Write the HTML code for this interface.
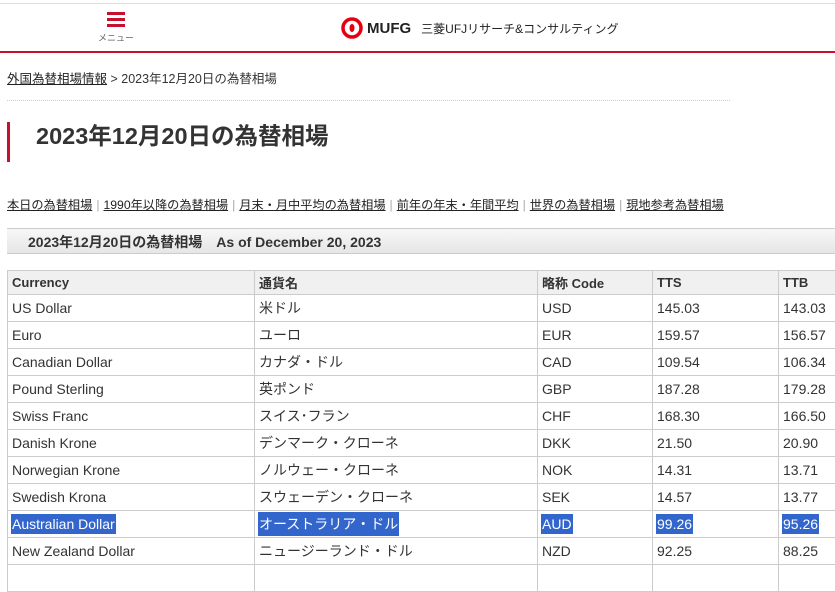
<!DOCTYPE html>
<html><head><meta charset="utf-8"><style>
body{margin:0;width:835px;height:569px;overflow:hidden;background:#fff;font-family:"Liberation Sans","Noto Sans CJK JP",sans-serif;color:#333;position:relative}
.a{position:absolute}
.top{left:0;top:3px;width:835px;height:1px;background:#ddd}
.red{left:0;top:51px;width:835px;height:2px;background:#c8102e}
.menu{left:98px;top:12px;width:36px;text-align:center;font-size:9px;color:#666}
.bars{width:18px;margin:0 auto 4px;height:15px;border-top:3px solid #c8102e;border-bottom:3px solid #c8102e;position:relative;box-sizing:border-box}
.bars:after{content:"";position:absolute;left:0;right:0;top:3px;height:3px;background:#c8102e}
.logo{left:341px;top:17px;display:flex;align-items:center;font-size:12px}
.crumb{left:7px;top:68px;font-size:12.5px;color:#333}
.crumb u{color:#222}
.dots{left:7px;top:100px;width:723px;border-top:1px dotted #ccc}
.bar{left:7px;top:122px;width:3px;height:40px;background:#c8102e}
.h1{left:36px;top:117px;font-size:23.5px;font-weight:bold;color:#333}
.links{left:7px;top:195px;font-size:12.2px;color:#222;white-space:nowrap}
.links u{color:#222}.links span{color:#aaa;margin:0 4px}
.cap{left:7px;top:228px;width:828px;height:26px;background:linear-gradient(#f7f7f7,#e6e6e6);border-top:1px solid #ccc;border-bottom:1px solid #ccc;box-sizing:border-box;font-size:14px;font-weight:bold;padding:3px 0 0 21px;color:#333}
table{position:absolute;left:7px;top:270px;border-collapse:collapse;font-size:14px;width:840px;table-layout:fixed}
td{border:1px solid #ccc;height:26px;padding:0 4px;color:#333;white-space:nowrap;overflow:hidden}
tr.h td{background:#f0f0f0;font-weight:bold;font-size:13px;height:23px}
tr.s td span{background:#3366cc;color:#fff;display:inline-block;padding:2px 1px;margin-left:-1px}
</style></head><body>
<div class="a top"></div>
<div class="a menu"><div class="bars"></div>メニュー</div>
<div class="a logo"><svg width="22" height="22" viewBox="0 0 22 22"><circle cx="11" cy="11" r="9" fill="none" stroke="#e60012" stroke-width="3.5"/><ellipse cx="11" cy="11" rx="2.5" ry="4" fill="#e60012"/></svg><b style="margin-left:4px;font-size:15px;color:#222">MUFG</b><span style="margin-left:10px;color:#222">三菱UFJリサーチ&amp;コンサルティング</span></div>
<div class="a red"></div>
<div class="a crumb"><u>外国為替相場情報</u> &gt; 2023年12月20日の為替相場</div>
<div class="a dots"></div>
<div class="a bar"></div>
<div class="a h1">2023年12月20日の為替相場</div>
<div class="a links"><u>本日の為替相場</u><span>|</span><u>1990年以降の為替相場</u><span>|</span><u>月末・月中平均の為替相場</u><span>|</span><u>前年の年末・年間平均</u><span>|</span><u>世界の為替相場</u><span>|</span><u>現地参考為替相場</u></div>
<div class="a cap">2023年12月20日の為替相場　As of December 20, 2023</div>
<table>
<colgroup><col style="width:247px"><col style="width:283px"><col style="width:115px"><col style="width:126px"><col></colgroup>
<tr class="h"><td>Currency</td><td>通貨名</td><td>略称 Code</td><td>TTS</td><td>TTB</td></tr>
<tr><td>US Dollar</td><td>米ドル</td><td>USD</td><td>145.03</td><td>143.03</td></tr>
<tr><td>Euro</td><td>ユーロ</td><td>EUR</td><td>159.57</td><td>156.57</td></tr>
<tr><td>Canadian Dollar</td><td>カナダ・ドル</td><td>CAD</td><td>109.54</td><td>106.34</td></tr>
<tr><td>Pound Sterling</td><td>英ポンド</td><td>GBP</td><td>187.28</td><td>179.28</td></tr>
<tr><td>Swiss Franc</td><td>スイス･フラン</td><td>CHF</td><td>168.30</td><td>166.50</td></tr>
<tr><td>Danish Krone</td><td>デンマーク・クローネ</td><td>DKK</td><td>21.50</td><td>20.90</td></tr>
<tr><td>Norwegian Krone</td><td>ノルウェー・クローネ</td><td>NOK</td><td>14.31</td><td>13.71</td></tr>
<tr><td>Swedish Krona</td><td>スウェーデン・クローネ</td><td>SEK</td><td>14.57</td><td>13.77</td></tr>
<tr class="s"><td><span>Australian Dollar</span></td><td><span>オーストラリア・ドル</span></td><td><span>AUD</span></td><td><span>99.26</span></td><td><span>95.26</span></td></tr>
<tr><td>New Zealand Dollar</td><td>ニュージーランド・ドル</td><td>NZD</td><td>92.25</td><td>88.25</td></tr>
<tr><td>&nbsp;</td><td></td><td></td><td></td><td></td></tr>
</table>
</body></html>
